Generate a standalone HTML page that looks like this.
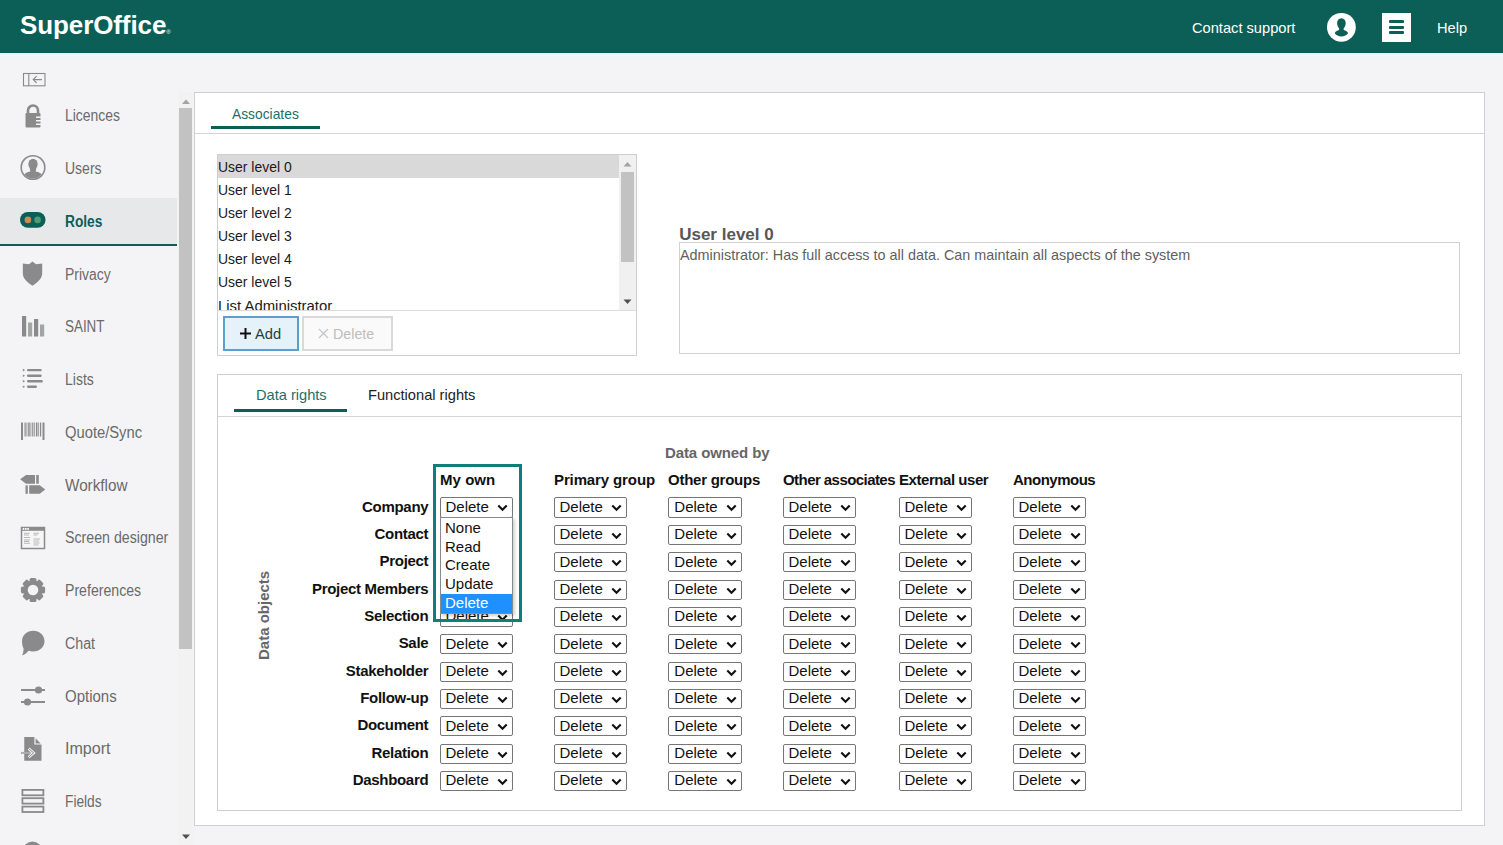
<!DOCTYPE html>
<html><head><meta charset="utf-8">
<style>
*{box-sizing:border-box;margin:0;padding:0}
html,body{width:1503px;height:845px;overflow:hidden;background:#f4f4f6;font-family:"Liberation Sans",sans-serif;}
.abs{position:absolute}
.t{position:absolute;white-space:nowrap;transform-origin:0 0}
svg{position:absolute}
.panel{position:absolute;background:#fff;border:1px solid #cfcfcf}
.ul{position:absolute;height:3px;background:#0b5f57}
.hl{position:absolute;height:1px;background:#d4d4d4}
.sel{position:absolute;width:73px;height:20px;border:1px solid #767676;border-radius:2px;background:#fff}
</style></head><body>
<div class="abs" style="left:0;top:0;width:1503px;height:53px;background:#0b5f57"></div>
<div class="t" style="left:20px;top:10px;color:#fff;font-weight:bold;font-size:26px;letter-spacing:-0.1px;line-height:30px">SuperOffice<span style="font-size:6px;font-weight:normal;letter-spacing:0">&reg;</span></div>
<div class="t" style="left:1192.00px;top:17.80px;font-size:15.00px;line-height:20px;color:#fff;font-weight:normal;transform:scaleX(0.976);">Contact support</div>

<svg style="left:1326px;top:12px" width="31" height="31" viewBox="0 0 31 31"><circle cx="15.4" cy="15.3" r="14.4" fill="#fff"/><path d="M15.4 6.3C12.5 6.3 11.1 8.5 11.1 11.1C11.1 13.3 11.9 15.2 13.1 16.2L13.1 18.1C11 18.8 9.3 19.7 8.7 21.3C10 23.3 12.5 24.5 15.4 24.5C18.3 24.5 20.8 23.3 22.1 21.3C21.5 19.7 19.8 18.8 17.7 18.1L17.7 16.2C18.9 15.2 19.7 13.3 19.7 11.1C19.7 8.5 18.3 6.3 15.4 6.3Z" fill="#0b5f57"/></svg>
<div class="abs" style="left:1382px;top:13px;width:29px;height:29px;background:#fff"></div>
<div class="abs" style="left:1389px;top:20px;width:15px;height:3px;border-radius:1px;background:#0b5f57"></div>
<div class="abs" style="left:1389px;top:26px;width:15px;height:3px;border-radius:1px;background:#0b5f57"></div>
<div class="abs" style="left:1389px;top:31px;width:15px;height:3px;border-radius:1px;background:#0b5f57"></div>
<div class="t" style="left:1437.00px;top:17.80px;font-size:15.00px;line-height:20px;color:#fff;font-weight:normal;transform:scaleX(0.976);">Help</div>

<div class="abs" style="left:0;top:198px;width:177px;height:46px;background:#e6e8ea"></div>
<div class="abs" style="left:0;top:244px;width:177px;height:2px;background:#0b5f57"></div>
<div class="t" style="left:65.30px;top:106.26px;font-size:16.00px;line-height:20px;color:#6a6a6a;font-weight:normal;transform:scaleX(0.869);">Licences</div>

<div class="t" style="left:65.30px;top:159.02px;font-size:16.00px;line-height:20px;color:#6a6a6a;font-weight:normal;transform:scaleX(0.875);">Users</div>

<div class="t" style="left:65.30px;top:211.78px;font-size:16.00px;line-height:20px;color:#0b5f57;font-weight:bold;transform:scaleX(0.857);">Roles</div>

<div class="t" style="left:65.30px;top:264.54px;font-size:16.00px;line-height:20px;color:#6a6a6a;font-weight:normal;transform:scaleX(0.871);">Privacy</div>

<div class="t" style="left:65.30px;top:317.30px;font-size:16.00px;line-height:20px;color:#6a6a6a;font-weight:normal;transform:scaleX(0.838);">SAINT</div>

<div class="t" style="left:65.30px;top:370.06px;font-size:16.00px;line-height:20px;color:#6a6a6a;font-weight:normal;transform:scaleX(0.874);">Lists</div>

<div class="t" style="left:65.30px;top:422.82px;font-size:16.00px;line-height:20px;color:#6a6a6a;font-weight:normal;transform:scaleX(0.922);">Quote/Sync</div>

<div class="t" style="left:65.30px;top:475.58px;font-size:16.00px;line-height:20px;color:#6a6a6a;font-weight:normal;transform:scaleX(0.954);">Workflow</div>

<div class="t" style="left:65.30px;top:528.34px;font-size:16.00px;line-height:20px;color:#6a6a6a;font-weight:normal;transform:scaleX(0.887);">Screen designer</div>

<div class="t" style="left:65.30px;top:581.10px;font-size:16.00px;line-height:20px;color:#6a6a6a;font-weight:normal;transform:scaleX(0.882);">Preferences</div>

<div class="t" style="left:65.30px;top:633.86px;font-size:16.00px;line-height:20px;color:#6a6a6a;font-weight:normal;transform:scaleX(0.888);">Chat</div>

<div class="t" style="left:65.30px;top:686.62px;font-size:16.00px;line-height:20px;color:#6a6a6a;font-weight:normal;transform:scaleX(0.937);">Options</div>

<div class="t" style="left:65.30px;top:739.38px;font-size:16.00px;line-height:20px;color:#6a6a6a;font-weight:normal;transform:scaleX(1.004);">Import</div>

<div class="t" style="left:65.30px;top:792.14px;font-size:16.00px;line-height:20px;color:#6a6a6a;font-weight:normal;transform:scaleX(0.858);">Fields</div>

<svg style="left:22px;top:72px" width="24" height="15" viewBox="0 0 24 15"><rect x="1.5" y="1.5" width="21.5" height="12.3" fill="none" stroke="#8a8a8a" stroke-width="1.1"/><line x1="6.8" y1="1.5" x2="6.8" y2="13.8" stroke="#8a8a8a" stroke-width="1.1"/><path d="M20 7.6H11.2M14.6 4.2L11.2 7.6L14.6 11" fill="none" stroke="#8a8a8a" stroke-width="1.1"/></svg>
<svg style="left:24px;top:103px" width="18" height="26" viewBox="0 0 18 26"><path d="M4 11V7.5a5 5 0 0 1 10 0V11" fill="none" stroke="#8a8a8a" stroke-width="2.6"/><rect x="1.5" y="10" width="15" height="14.5" rx="1" fill="#8a8a8a"/><rect x="12" y="13.5" width="5" height="1.5" fill="#f4f4f6"/><rect x="12" y="17" width="5" height="1.5" fill="#f4f4f6"/><rect x="12" y="20.5" width="5" height="1.5" fill="#f4f4f6"/></svg>
<svg style="left:20px;top:154px" width="27" height="27" viewBox="0 0 27 27"><defs><clipPath id="uc"><circle cx="13" cy="13.5" r="11"/></clipPath></defs><circle cx="13" cy="13.5" r="11.8" fill="none" stroke="#8a8a8a" stroke-width="1.6"/><g clip-path="url(#uc)" fill="#8a8a8a"><ellipse cx="13" cy="10.3" rx="4.6" ry="5.6"/><path d="M9.8 14.5L10.3 17.5C6 18.3 3.5 20 2.8 23.5L3 27H23L23.2 23.5C22.5 20 20 18.3 15.7 17.5L16.2 14.5Z"/></g></svg>
<svg style="left:20px;top:212px" width="26" height="16" viewBox="0 0 26 16"><rect x="0" y="0" width="25.5" height="15.8" rx="7.9" fill="#0c5f58"/><circle cx="7.9" cy="7.9" r="3.3" fill="#d08a55"/><circle cx="17.6" cy="7.9" r="3.3" fill="#4f9c70"/></svg>
<svg style="left:22px;top:261px" width="21" height="25" viewBox="0 0 21 25"><path d="M10.5 0.5L14 3.2L20.2 2.4V12.5C20.2 17.5 15.5 21.5 10.5 24.8C5.5 21.5 0.8 17.5 0.8 12.5V2.4L7 3.2Z" fill="#8a8a8a"/></svg>
<svg style="left:21px;top:316px" width="24" height="21" viewBox="0 0 24 21"><rect x="1" y="0" width="4.2" height="20.5" fill="#8a8a8a"/><rect x="7" y="6.5" width="4.2" height="14" fill="#a2a6a4"/><rect x="13" y="3" width="4.2" height="17.5" fill="#8a8a8a"/><rect x="19" y="8.5" width="4.2" height="12" fill="#a2a6a4"/></svg>
<svg style="left:21px;top:367px" width="24" height="23" viewBox="0 0 24 23"><g fill="#8a8a8a"><rect x="6" y="1.90" width="14.7" height="2.4" rx="1.1"/><path d="M1.8 1.80L4.2 3.10L1.8 4.40Z"/><rect x="6" y="7.50" width="14.7" height="2.4" rx="1.1"/><path d="M1.8 7.40L4.2 8.70L1.8 10.00Z"/><rect x="6" y="13.10" width="15.8" height="2.4" rx="1.1"/><path d="M1.8 13.00L4.2 14.30L1.8 15.60Z"/><rect x="6" y="18.50" width="10.0" height="2.4" rx="1.1"/><path d="M1.8 18.40L4.2 19.70L1.8 21.00Z"/></g></svg>
<svg style="left:20px;top:422px" width="26" height="19" viewBox="0 0 26 19"><g fill="#8a8a8a"><rect x="1" y="0.5" width="2" height="17.5"/><rect x="22.5" y="0.5" width="2" height="17.5"/><rect x="4.5" y="0.5" width="1.2" height="14"/><rect x="6.5" y="0.5" width="0.8" height="14"/><rect x="8.2" y="0.5" width="1.5" height="14"/><rect x="10.5" y="0.5" width="0.8" height="14"/><rect x="12.2" y="0.5" width="1.2" height="14"/><rect x="14.3" y="0.5" width="0.8" height="14"/><rect x="16.0" y="0.5" width="1.5" height="14"/><rect x="18.3" y="0.5" width="0.8" height="14"/><rect x="20.0" y="0.5" width="1.2" height="14"/></g></svg>
<svg style="left:19px;top:474px" width="28" height="21" viewBox="0 0 28 21"><g fill="#8a8a8a"><path d="M1.1 5.35L7 1H16V9.7H7Z"/><rect x="17.2" y="1" width="2.6" height="8.7"/><rect x="6.5" y="11.3" width="2.3" height="8.5"/><path d="M10.2 11.3H20.8L26.2 15.55L20.8 19.8H10.2Z"/></g></svg>
<svg style="left:20px;top:526px" width="26" height="24" viewBox="0 0 26 24"><rect x="1.5" y="1.5" width="23" height="21" fill="#f6f6f6" stroke="#8a8a8a" stroke-width="1.5"/><rect x="1" y="1" width="24" height="3.8" fill="#8a8a8a"/><g fill="#fff"><rect x="2.7" y="2" width="1.6" height="1.8"/><rect x="5" y="2" width="1.6" height="1.8"/><rect x="7.3" y="2" width="1.6" height="1.8"/></g><g fill="#b8b8b8"><rect x="4" y="6.8" width="5.5" height="1"/><rect x="4" y="8.5" width="5" height="1"/><rect x="4" y="11" width="6" height="1"/><rect x="4" y="13.5" width="6" height="1"/><rect x="4" y="15" width="5" height="1"/><rect x="4" y="16.8" width="6" height="1"/><rect x="13.5" y="6.8" width="5.5" height="1"/><rect x="13.5" y="8.5" width="4" height="1"/><rect x="13.5" y="12.5" width="6.5" height="1"/><rect x="13.5" y="14.5" width="5.5" height="1"/><rect x="13.5" y="16.5" width="6" height="1"/><rect x="13.5" y="18.5" width="5" height="1"/></g></svg>
<svg style="left:20px;top:577px" width="26" height="26" viewBox="-13 -13 26 26"><g fill="#8a8a8a"><circle r="9.6"/><g id="t"><rect x="-3.4" y="-12.1" width="6.8" height="5" rx="1.6"/></g><use href="#t" transform="rotate(45)"/><use href="#t" transform="rotate(90)"/><use href="#t" transform="rotate(135)"/><use href="#t" transform="rotate(180)"/><use href="#t" transform="rotate(225)"/><use href="#t" transform="rotate(270)"/><use href="#t" transform="rotate(315)"/></g><circle r="5.3" fill="#f4f4f6"/></svg>
<svg style="left:20px;top:630px" width="26" height="27" viewBox="0 0 26 27"><path d="M13.3 0.8C19.5 0.8 24.5 5.4 24.5 11.2C24.5 17 19.5 21.5 13.3 21.5C11.5 21.5 10 21.2 8.7 20.7C6.8 23 4.5 24.6 2 25.5C3 23.5 3.5 21.5 3.6 18.5C2.5 16.5 2 14 2 11.2C2 5.4 7 0.8 13.3 0.8Z" fill="#8a8a8a"/></svg>
<svg style="left:20px;top:684px" width="26" height="22" viewBox="0 0 26 22"><g fill="#8a8a8a"><rect x="1" y="5" width="24" height="2"/><circle cx="18.5" cy="6" r="3.6"/><rect x="1" y="17" width="24" height="2"/><circle cx="7.5" cy="18" r="3.6"/></g></svg>
<svg style="left:20px;top:736px" width="24" height="26" viewBox="0 0 24 26"><path d="M4.25 1H14.4V8.6H21.5V24.8H4.25Z" fill="#8a8a8a"/><path d="M15.6 2.2L20.6 7.4H15.6Z" fill="#8a8a8a"/><path d="M1 16.9H11" stroke="#a9adab" stroke-width="2"/><path d="M8.6 12.6L13.6 16.9L8.6 21.2" fill="none" stroke="#f4f4f6" stroke-width="2.8" stroke-linejoin="miter"/><path d="M8.6 12.6L13.6 16.9L8.6 21.2" fill="none" stroke="#8a8a8a" stroke-width="1"/></svg>
<svg style="left:20px;top:788px" width="25" height="26" viewBox="0 0 25 26"><g fill="none" stroke="#8a8a8a" stroke-width="1.8"><rect x="2.4" y="1.9" width="21" height="5.4"/><rect x="2.4" y="10.2" width="21" height="5.4"/><rect x="2.4" y="18.6" width="21" height="5.4"/></g></svg>
<svg style="left:22px;top:841px" width="21" height="5" viewBox="0 0 21 5"><circle cx="10.5" cy="10" r="9.6" fill="#8a8a8a"/></svg>

<div class="abs" style="left:178px;top:92px;width:15px;height:753px;background:#f2f2f3"></div>
<div class="abs" style="left:179px;top:108px;width:13px;height:541px;background:#c2c2c2"></div>
<svg style="left:180px;top:97px" width="12" height="8"><path d="M2 7L6 2.5L10 7Z" fill="#a3a3a3"/></svg>
<svg style="left:180px;top:833px" width="12" height="8"><path d="M2 1.5L6 6L10 1.5Z" fill="#505050"/></svg>
<div class="panel" style="left:194px;top:92px;width:1291px;height:734px"></div>
<div class="t" style="left:232.30px;top:103.50px;font-size:15.00px;line-height:20px;color:#1d6f69;font-weight:normal;transform:scaleX(0.921);">Associates</div>

<div class="ul" style="left:211px;top:126px;width:109px"></div>
<div class="hl" style="left:195px;top:133px;width:1289px"></div>
<div class="panel" style="left:217px;top:154px;width:420px;height:202px;border-color:#cfcfcf"></div>
<div class="abs" style="left:218px;top:155px;width:401px;height:23px;background:#d9d9d9"></div>
<div class="abs" style="left:218px;top:310px;width:418px;height:1px;background:#dcdcdc"></div>
<div class="abs" style="left:619px;top:155px;width:17px;height:155px;background:#f0f0f0"></div>
<div class="abs" style="left:621px;top:172px;width:13px;height:90px;background:#c2c2c2"></div>
<svg style="left:621px;top:160px" width="13" height="8"><path d="M2.5 6.5L6.5 2L10.5 6.5Z" fill="#a3a3a3"/></svg>
<svg style="left:621px;top:298px" width="13" height="8"><path d="M2.5 1.5L6.5 6L10.5 1.5Z" fill="#505050"/></svg>
<div style="position:absolute;left:218px;top:155px;width:401px;height:155px;overflow:hidden">
<div class="t" style="left:0.00px;top:1.70px;font-size:15.00px;line-height:20px;color:#1a1a1a;font-weight:normal;transform:scaleX(0.930);">User level 0</div>

<div class="t" style="left:0.00px;top:24.70px;font-size:15.00px;line-height:20px;color:#1a1a1a;font-weight:normal;transform:scaleX(0.930);">User level 1</div>

<div class="t" style="left:0.00px;top:47.70px;font-size:15.00px;line-height:20px;color:#1a1a1a;font-weight:normal;transform:scaleX(0.930);">User level 2</div>

<div class="t" style="left:0.00px;top:70.70px;font-size:15.00px;line-height:20px;color:#1a1a1a;font-weight:normal;transform:scaleX(0.930);">User level 3</div>

<div class="t" style="left:0.00px;top:93.70px;font-size:15.00px;line-height:20px;color:#1a1a1a;font-weight:normal;transform:scaleX(0.930);">User level 4</div>

<div class="t" style="left:0.00px;top:116.70px;font-size:15.00px;line-height:20px;color:#1a1a1a;font-weight:normal;transform:scaleX(0.930);">User level 5</div>

<div class="t" style="left:0.00px;top:140.90px;font-size:15.00px;line-height:20px;color:#1a1a1a;font-weight:normal;transform:scaleX(0.993);">List Administrator</div>

</div>
<div class="abs" style="left:223px;top:316px;width:76px;height:35px;border:2px solid #5a9fd2;background:#e6f2f9"></div>
<svg style="left:239px;top:327px" width="13" height="13"><path d="M6.5 1V12M1 6.5H12" stroke="#111" stroke-width="2"/></svg>
<div class="t" style="left:254.50px;top:323.80px;font-size:15.00px;line-height:20px;color:#1f3f3c;font-weight:normal;transform:scaleX(0.977);">Add</div>

<div class="abs" style="left:302px;top:316px;width:91px;height:35px;border:2px solid #d9d9d9;background:#fafafa"></div>
<svg style="left:318px;top:328px" width="11" height="11"><path d="M1 1L10 10M10 1L1 10" stroke="#c4c4c4" stroke-width="1.2"/></svg>
<div class="t" style="left:333.00px;top:323.80px;font-size:15.00px;line-height:20px;color:#bdbdbd;font-weight:normal;transform:scaleX(0.950);">Delete</div>

<div class="t" style="left:679.20px;top:224.81px;font-size:17.00px;line-height:20px;color:#575757;font-weight:bold;transform:scaleX(1.000);">User level 0</div>

<div class="panel" style="left:679px;top:242px;width:781px;height:112px;border-color:#d2d2d2"></div>
<div class="t" style="left:680.00px;top:245.01px;font-size:14.40px;line-height:20px;color:#5f5f5f;font-weight:normal;transform:scaleX(1.000);">Administrator: Has full access to all data. Can maintain all aspects of the system</div>

<div class="panel" style="left:217px;top:374px;width:1245px;height:437px;border-color:#cfcfcf"></div>
<div class="t" style="left:256.00px;top:385.30px;font-size:15.00px;line-height:20px;color:#1d6f69;font-weight:normal;transform:scaleX(0.974);">Data rights</div>

<div class="t" style="left:368.00px;top:385.30px;font-size:15.00px;line-height:20px;color:#222;font-weight:normal;transform:scaleX(0.976);">Functional rights</div>

<div class="ul" style="left:234px;top:409px;width:113px"></div>
<div class="hl" style="left:218px;top:416px;width:1243px"></div>
<div class="t" style="left:665.00px;top:443.80px;font-size:15px;line-height:18px;color:#666;font-weight:bold;letter-spacing:-0.1px;">Data owned by</div>

<div class="t" style="left:255px;top:660px;transform:rotate(-90deg);font-size:15px;font-weight:bold;color:#666;line-height:18px">Data objects</div>
<div class="t" style="left:440.00px;top:470.80px;font-size:15px;line-height:18px;color:#111;font-weight:bold;letter-spacing:0.05px;">My own</div>

<div class="t" style="left:554.00px;top:470.80px;font-size:15px;line-height:18px;color:#111;font-weight:bold;letter-spacing:-0.12px;">Primary group</div>

<div class="t" style="left:668.00px;top:470.80px;font-size:15px;line-height:18px;color:#111;font-weight:bold;letter-spacing:-0.25px;">Other groups</div>

<div class="t" style="left:783.00px;top:470.80px;font-size:15px;line-height:18px;color:#111;font-weight:bold;letter-spacing:-0.56px;">Other associates</div>

<div class="t" style="left:899.00px;top:470.80px;font-size:15px;line-height:18px;color:#111;font-weight:bold;letter-spacing:-0.45px;">External user</div>

<div class="t" style="left:1013.00px;top:470.80px;font-size:15px;line-height:18px;color:#111;font-weight:bold;letter-spacing:-0.5px;">Anonymous</div>

<div class="t" style="right:1074.70px;top:497.65px;font-size:15px;line-height:18px;color:#111;font-weight:bold;letter-spacing:-0.3px;text-align:right;">Company</div>

<div class="sel" style="left:440px;top:497px;height:21px;"><svg style="left:56px;top:6px" width="11" height="8" viewBox="0 0 11 8"><path d="M1.3 1.5L5.5 5.8L9.7 1.5" fill="none" stroke="#111" stroke-width="2.1"/></svg></div>
<div class="t" style="left:445.50px;top:497.85px;font-size:15px;line-height:18px;color:#111;font-weight:normal;letter-spacing:0px;">Delete</div>

<div class="sel" style="left:554px;top:497px;height:21px;"><svg style="left:56px;top:6px" width="11" height="8" viewBox="0 0 11 8"><path d="M1.3 1.5L5.5 5.8L9.7 1.5" fill="none" stroke="#111" stroke-width="2.1"/></svg></div>
<div class="t" style="left:559.50px;top:497.85px;font-size:15px;line-height:18px;color:#111;font-weight:normal;letter-spacing:0px;">Delete</div>

<div class="sel" style="left:668px;top:497px;height:21px;width:74px;"><svg style="left:57px;top:6px" width="11" height="8" viewBox="0 0 11 8"><path d="M1.3 1.5L5.5 5.8L9.7 1.5" fill="none" stroke="#111" stroke-width="2.1"/></svg></div>
<div class="t" style="left:674.30px;top:497.85px;font-size:15px;line-height:18px;color:#111;font-weight:normal;letter-spacing:0px;">Delete</div>

<div class="sel" style="left:783px;top:497px;height:21px;"><svg style="left:56px;top:6px" width="11" height="8" viewBox="0 0 11 8"><path d="M1.3 1.5L5.5 5.8L9.7 1.5" fill="none" stroke="#111" stroke-width="2.1"/></svg></div>
<div class="t" style="left:788.50px;top:497.85px;font-size:15px;line-height:18px;color:#111;font-weight:normal;letter-spacing:0px;">Delete</div>

<div class="sel" style="left:899px;top:497px;height:21px;"><svg style="left:56px;top:6px" width="11" height="8" viewBox="0 0 11 8"><path d="M1.3 1.5L5.5 5.8L9.7 1.5" fill="none" stroke="#111" stroke-width="2.1"/></svg></div>
<div class="t" style="left:904.50px;top:497.85px;font-size:15px;line-height:18px;color:#111;font-weight:normal;letter-spacing:0px;">Delete</div>

<div class="sel" style="left:1013px;top:497px;height:21px;"><svg style="left:56px;top:6px" width="11" height="8" viewBox="0 0 11 8"><path d="M1.3 1.5L5.5 5.8L9.7 1.5" fill="none" stroke="#111" stroke-width="2.1"/></svg></div>
<div class="t" style="left:1018.50px;top:497.85px;font-size:15px;line-height:18px;color:#111;font-weight:normal;letter-spacing:0px;">Delete</div>

<div class="t" style="right:1074.70px;top:524.99px;font-size:15px;line-height:18px;color:#111;font-weight:bold;letter-spacing:-0.3px;text-align:right;">Contact</div>

<div class="sel" style="left:440px;top:525px;"><svg style="left:56px;top:6px" width="11" height="8" viewBox="0 0 11 8"><path d="M1.3 1.5L5.5 5.8L9.7 1.5" fill="none" stroke="#111" stroke-width="2.1"/></svg></div>
<div class="t" style="left:445.50px;top:525.19px;font-size:15px;line-height:18px;color:#111;font-weight:normal;letter-spacing:0px;">Delete</div>

<div class="sel" style="left:554px;top:525px;"><svg style="left:56px;top:6px" width="11" height="8" viewBox="0 0 11 8"><path d="M1.3 1.5L5.5 5.8L9.7 1.5" fill="none" stroke="#111" stroke-width="2.1"/></svg></div>
<div class="t" style="left:559.50px;top:525.19px;font-size:15px;line-height:18px;color:#111;font-weight:normal;letter-spacing:0px;">Delete</div>

<div class="sel" style="left:668px;top:525px;width:74px;"><svg style="left:57px;top:6px" width="11" height="8" viewBox="0 0 11 8"><path d="M1.3 1.5L5.5 5.8L9.7 1.5" fill="none" stroke="#111" stroke-width="2.1"/></svg></div>
<div class="t" style="left:674.30px;top:525.19px;font-size:15px;line-height:18px;color:#111;font-weight:normal;letter-spacing:0px;">Delete</div>

<div class="sel" style="left:783px;top:525px;"><svg style="left:56px;top:6px" width="11" height="8" viewBox="0 0 11 8"><path d="M1.3 1.5L5.5 5.8L9.7 1.5" fill="none" stroke="#111" stroke-width="2.1"/></svg></div>
<div class="t" style="left:788.50px;top:525.19px;font-size:15px;line-height:18px;color:#111;font-weight:normal;letter-spacing:0px;">Delete</div>

<div class="sel" style="left:899px;top:525px;"><svg style="left:56px;top:6px" width="11" height="8" viewBox="0 0 11 8"><path d="M1.3 1.5L5.5 5.8L9.7 1.5" fill="none" stroke="#111" stroke-width="2.1"/></svg></div>
<div class="t" style="left:904.50px;top:525.19px;font-size:15px;line-height:18px;color:#111;font-weight:normal;letter-spacing:0px;">Delete</div>

<div class="sel" style="left:1013px;top:525px;"><svg style="left:56px;top:6px" width="11" height="8" viewBox="0 0 11 8"><path d="M1.3 1.5L5.5 5.8L9.7 1.5" fill="none" stroke="#111" stroke-width="2.1"/></svg></div>
<div class="t" style="left:1018.50px;top:525.19px;font-size:15px;line-height:18px;color:#111;font-weight:normal;letter-spacing:0px;">Delete</div>

<div class="t" style="right:1074.70px;top:552.33px;font-size:15px;line-height:18px;color:#111;font-weight:bold;letter-spacing:-0.3px;text-align:right;">Project</div>

<div class="sel" style="left:440px;top:552px;"><svg style="left:56px;top:6px" width="11" height="8" viewBox="0 0 11 8"><path d="M1.3 1.5L5.5 5.8L9.7 1.5" fill="none" stroke="#111" stroke-width="2.1"/></svg></div>
<div class="t" style="left:445.50px;top:552.53px;font-size:15px;line-height:18px;color:#111;font-weight:normal;letter-spacing:0px;">Delete</div>

<div class="sel" style="left:554px;top:552px;"><svg style="left:56px;top:6px" width="11" height="8" viewBox="0 0 11 8"><path d="M1.3 1.5L5.5 5.8L9.7 1.5" fill="none" stroke="#111" stroke-width="2.1"/></svg></div>
<div class="t" style="left:559.50px;top:552.53px;font-size:15px;line-height:18px;color:#111;font-weight:normal;letter-spacing:0px;">Delete</div>

<div class="sel" style="left:668px;top:552px;width:74px;"><svg style="left:57px;top:6px" width="11" height="8" viewBox="0 0 11 8"><path d="M1.3 1.5L5.5 5.8L9.7 1.5" fill="none" stroke="#111" stroke-width="2.1"/></svg></div>
<div class="t" style="left:674.30px;top:552.53px;font-size:15px;line-height:18px;color:#111;font-weight:normal;letter-spacing:0px;">Delete</div>

<div class="sel" style="left:783px;top:552px;"><svg style="left:56px;top:6px" width="11" height="8" viewBox="0 0 11 8"><path d="M1.3 1.5L5.5 5.8L9.7 1.5" fill="none" stroke="#111" stroke-width="2.1"/></svg></div>
<div class="t" style="left:788.50px;top:552.53px;font-size:15px;line-height:18px;color:#111;font-weight:normal;letter-spacing:0px;">Delete</div>

<div class="sel" style="left:899px;top:552px;"><svg style="left:56px;top:6px" width="11" height="8" viewBox="0 0 11 8"><path d="M1.3 1.5L5.5 5.8L9.7 1.5" fill="none" stroke="#111" stroke-width="2.1"/></svg></div>
<div class="t" style="left:904.50px;top:552.53px;font-size:15px;line-height:18px;color:#111;font-weight:normal;letter-spacing:0px;">Delete</div>

<div class="sel" style="left:1013px;top:552px;"><svg style="left:56px;top:6px" width="11" height="8" viewBox="0 0 11 8"><path d="M1.3 1.5L5.5 5.8L9.7 1.5" fill="none" stroke="#111" stroke-width="2.1"/></svg></div>
<div class="t" style="left:1018.50px;top:552.53px;font-size:15px;line-height:18px;color:#111;font-weight:normal;letter-spacing:0px;">Delete</div>

<div class="t" style="right:1074.70px;top:579.67px;font-size:15px;line-height:18px;color:#111;font-weight:bold;letter-spacing:-0.3px;text-align:right;">Project Members</div>

<div class="sel" style="left:440px;top:580px;"><svg style="left:56px;top:6px" width="11" height="8" viewBox="0 0 11 8"><path d="M1.3 1.5L5.5 5.8L9.7 1.5" fill="none" stroke="#111" stroke-width="2.1"/></svg></div>
<div class="t" style="left:445.50px;top:579.87px;font-size:15px;line-height:18px;color:#111;font-weight:normal;letter-spacing:0px;">Delete</div>

<div class="sel" style="left:554px;top:580px;"><svg style="left:56px;top:6px" width="11" height="8" viewBox="0 0 11 8"><path d="M1.3 1.5L5.5 5.8L9.7 1.5" fill="none" stroke="#111" stroke-width="2.1"/></svg></div>
<div class="t" style="left:559.50px;top:579.87px;font-size:15px;line-height:18px;color:#111;font-weight:normal;letter-spacing:0px;">Delete</div>

<div class="sel" style="left:668px;top:580px;width:74px;"><svg style="left:57px;top:6px" width="11" height="8" viewBox="0 0 11 8"><path d="M1.3 1.5L5.5 5.8L9.7 1.5" fill="none" stroke="#111" stroke-width="2.1"/></svg></div>
<div class="t" style="left:674.30px;top:579.87px;font-size:15px;line-height:18px;color:#111;font-weight:normal;letter-spacing:0px;">Delete</div>

<div class="sel" style="left:783px;top:580px;"><svg style="left:56px;top:6px" width="11" height="8" viewBox="0 0 11 8"><path d="M1.3 1.5L5.5 5.8L9.7 1.5" fill="none" stroke="#111" stroke-width="2.1"/></svg></div>
<div class="t" style="left:788.50px;top:579.87px;font-size:15px;line-height:18px;color:#111;font-weight:normal;letter-spacing:0px;">Delete</div>

<div class="sel" style="left:899px;top:580px;"><svg style="left:56px;top:6px" width="11" height="8" viewBox="0 0 11 8"><path d="M1.3 1.5L5.5 5.8L9.7 1.5" fill="none" stroke="#111" stroke-width="2.1"/></svg></div>
<div class="t" style="left:904.50px;top:579.87px;font-size:15px;line-height:18px;color:#111;font-weight:normal;letter-spacing:0px;">Delete</div>

<div class="sel" style="left:1013px;top:580px;"><svg style="left:56px;top:6px" width="11" height="8" viewBox="0 0 11 8"><path d="M1.3 1.5L5.5 5.8L9.7 1.5" fill="none" stroke="#111" stroke-width="2.1"/></svg></div>
<div class="t" style="left:1018.50px;top:579.87px;font-size:15px;line-height:18px;color:#111;font-weight:normal;letter-spacing:0px;">Delete</div>

<div class="t" style="right:1074.70px;top:607.01px;font-size:15px;line-height:18px;color:#111;font-weight:bold;letter-spacing:-0.3px;text-align:right;">Selection</div>

<div class="sel" style="left:440px;top:607px;"><svg style="left:56px;top:6px" width="11" height="8" viewBox="0 0 11 8"><path d="M1.3 1.5L5.5 5.8L9.7 1.5" fill="none" stroke="#111" stroke-width="2.1"/></svg></div>
<div class="t" style="left:445.50px;top:607.21px;font-size:15px;line-height:18px;color:#111;font-weight:normal;letter-spacing:0px;">Delete</div>

<div class="sel" style="left:554px;top:607px;"><svg style="left:56px;top:6px" width="11" height="8" viewBox="0 0 11 8"><path d="M1.3 1.5L5.5 5.8L9.7 1.5" fill="none" stroke="#111" stroke-width="2.1"/></svg></div>
<div class="t" style="left:559.50px;top:607.21px;font-size:15px;line-height:18px;color:#111;font-weight:normal;letter-spacing:0px;">Delete</div>

<div class="sel" style="left:668px;top:607px;width:74px;"><svg style="left:57px;top:6px" width="11" height="8" viewBox="0 0 11 8"><path d="M1.3 1.5L5.5 5.8L9.7 1.5" fill="none" stroke="#111" stroke-width="2.1"/></svg></div>
<div class="t" style="left:674.30px;top:607.21px;font-size:15px;line-height:18px;color:#111;font-weight:normal;letter-spacing:0px;">Delete</div>

<div class="sel" style="left:783px;top:607px;"><svg style="left:56px;top:6px" width="11" height="8" viewBox="0 0 11 8"><path d="M1.3 1.5L5.5 5.8L9.7 1.5" fill="none" stroke="#111" stroke-width="2.1"/></svg></div>
<div class="t" style="left:788.50px;top:607.21px;font-size:15px;line-height:18px;color:#111;font-weight:normal;letter-spacing:0px;">Delete</div>

<div class="sel" style="left:899px;top:607px;"><svg style="left:56px;top:6px" width="11" height="8" viewBox="0 0 11 8"><path d="M1.3 1.5L5.5 5.8L9.7 1.5" fill="none" stroke="#111" stroke-width="2.1"/></svg></div>
<div class="t" style="left:904.50px;top:607.21px;font-size:15px;line-height:18px;color:#111;font-weight:normal;letter-spacing:0px;">Delete</div>

<div class="sel" style="left:1013px;top:607px;"><svg style="left:56px;top:6px" width="11" height="8" viewBox="0 0 11 8"><path d="M1.3 1.5L5.5 5.8L9.7 1.5" fill="none" stroke="#111" stroke-width="2.1"/></svg></div>
<div class="t" style="left:1018.50px;top:607.21px;font-size:15px;line-height:18px;color:#111;font-weight:normal;letter-spacing:0px;">Delete</div>

<div class="t" style="right:1074.70px;top:634.35px;font-size:15px;line-height:18px;color:#111;font-weight:bold;letter-spacing:-0.3px;text-align:right;">Sale</div>

<div class="sel" style="left:440px;top:634px;"><svg style="left:56px;top:6px" width="11" height="8" viewBox="0 0 11 8"><path d="M1.3 1.5L5.5 5.8L9.7 1.5" fill="none" stroke="#111" stroke-width="2.1"/></svg></div>
<div class="t" style="left:445.50px;top:634.55px;font-size:15px;line-height:18px;color:#111;font-weight:normal;letter-spacing:0px;">Delete</div>

<div class="sel" style="left:554px;top:634px;"><svg style="left:56px;top:6px" width="11" height="8" viewBox="0 0 11 8"><path d="M1.3 1.5L5.5 5.8L9.7 1.5" fill="none" stroke="#111" stroke-width="2.1"/></svg></div>
<div class="t" style="left:559.50px;top:634.55px;font-size:15px;line-height:18px;color:#111;font-weight:normal;letter-spacing:0px;">Delete</div>

<div class="sel" style="left:668px;top:634px;width:74px;"><svg style="left:57px;top:6px" width="11" height="8" viewBox="0 0 11 8"><path d="M1.3 1.5L5.5 5.8L9.7 1.5" fill="none" stroke="#111" stroke-width="2.1"/></svg></div>
<div class="t" style="left:674.30px;top:634.55px;font-size:15px;line-height:18px;color:#111;font-weight:normal;letter-spacing:0px;">Delete</div>

<div class="sel" style="left:783px;top:634px;"><svg style="left:56px;top:6px" width="11" height="8" viewBox="0 0 11 8"><path d="M1.3 1.5L5.5 5.8L9.7 1.5" fill="none" stroke="#111" stroke-width="2.1"/></svg></div>
<div class="t" style="left:788.50px;top:634.55px;font-size:15px;line-height:18px;color:#111;font-weight:normal;letter-spacing:0px;">Delete</div>

<div class="sel" style="left:899px;top:634px;"><svg style="left:56px;top:6px" width="11" height="8" viewBox="0 0 11 8"><path d="M1.3 1.5L5.5 5.8L9.7 1.5" fill="none" stroke="#111" stroke-width="2.1"/></svg></div>
<div class="t" style="left:904.50px;top:634.55px;font-size:15px;line-height:18px;color:#111;font-weight:normal;letter-spacing:0px;">Delete</div>

<div class="sel" style="left:1013px;top:634px;"><svg style="left:56px;top:6px" width="11" height="8" viewBox="0 0 11 8"><path d="M1.3 1.5L5.5 5.8L9.7 1.5" fill="none" stroke="#111" stroke-width="2.1"/></svg></div>
<div class="t" style="left:1018.50px;top:634.55px;font-size:15px;line-height:18px;color:#111;font-weight:normal;letter-spacing:0px;">Delete</div>

<div class="t" style="right:1074.70px;top:661.69px;font-size:15px;line-height:18px;color:#111;font-weight:bold;letter-spacing:-0.3px;text-align:right;">Stakeholder</div>

<div class="sel" style="left:440px;top:662px;"><svg style="left:56px;top:6px" width="11" height="8" viewBox="0 0 11 8"><path d="M1.3 1.5L5.5 5.8L9.7 1.5" fill="none" stroke="#111" stroke-width="2.1"/></svg></div>
<div class="t" style="left:445.50px;top:661.89px;font-size:15px;line-height:18px;color:#111;font-weight:normal;letter-spacing:0px;">Delete</div>

<div class="sel" style="left:554px;top:662px;"><svg style="left:56px;top:6px" width="11" height="8" viewBox="0 0 11 8"><path d="M1.3 1.5L5.5 5.8L9.7 1.5" fill="none" stroke="#111" stroke-width="2.1"/></svg></div>
<div class="t" style="left:559.50px;top:661.89px;font-size:15px;line-height:18px;color:#111;font-weight:normal;letter-spacing:0px;">Delete</div>

<div class="sel" style="left:668px;top:662px;width:74px;"><svg style="left:57px;top:6px" width="11" height="8" viewBox="0 0 11 8"><path d="M1.3 1.5L5.5 5.8L9.7 1.5" fill="none" stroke="#111" stroke-width="2.1"/></svg></div>
<div class="t" style="left:674.30px;top:661.89px;font-size:15px;line-height:18px;color:#111;font-weight:normal;letter-spacing:0px;">Delete</div>

<div class="sel" style="left:783px;top:662px;"><svg style="left:56px;top:6px" width="11" height="8" viewBox="0 0 11 8"><path d="M1.3 1.5L5.5 5.8L9.7 1.5" fill="none" stroke="#111" stroke-width="2.1"/></svg></div>
<div class="t" style="left:788.50px;top:661.89px;font-size:15px;line-height:18px;color:#111;font-weight:normal;letter-spacing:0px;">Delete</div>

<div class="sel" style="left:899px;top:662px;"><svg style="left:56px;top:6px" width="11" height="8" viewBox="0 0 11 8"><path d="M1.3 1.5L5.5 5.8L9.7 1.5" fill="none" stroke="#111" stroke-width="2.1"/></svg></div>
<div class="t" style="left:904.50px;top:661.89px;font-size:15px;line-height:18px;color:#111;font-weight:normal;letter-spacing:0px;">Delete</div>

<div class="sel" style="left:1013px;top:662px;"><svg style="left:56px;top:6px" width="11" height="8" viewBox="0 0 11 8"><path d="M1.3 1.5L5.5 5.8L9.7 1.5" fill="none" stroke="#111" stroke-width="2.1"/></svg></div>
<div class="t" style="left:1018.50px;top:661.89px;font-size:15px;line-height:18px;color:#111;font-weight:normal;letter-spacing:0px;">Delete</div>

<div class="t" style="right:1074.70px;top:689.03px;font-size:15px;line-height:18px;color:#111;font-weight:bold;letter-spacing:-0.3px;text-align:right;">Follow-up</div>

<div class="sel" style="left:440px;top:689px;"><svg style="left:56px;top:6px" width="11" height="8" viewBox="0 0 11 8"><path d="M1.3 1.5L5.5 5.8L9.7 1.5" fill="none" stroke="#111" stroke-width="2.1"/></svg></div>
<div class="t" style="left:445.50px;top:689.23px;font-size:15px;line-height:18px;color:#111;font-weight:normal;letter-spacing:0px;">Delete</div>

<div class="sel" style="left:554px;top:689px;"><svg style="left:56px;top:6px" width="11" height="8" viewBox="0 0 11 8"><path d="M1.3 1.5L5.5 5.8L9.7 1.5" fill="none" stroke="#111" stroke-width="2.1"/></svg></div>
<div class="t" style="left:559.50px;top:689.23px;font-size:15px;line-height:18px;color:#111;font-weight:normal;letter-spacing:0px;">Delete</div>

<div class="sel" style="left:668px;top:689px;width:74px;"><svg style="left:57px;top:6px" width="11" height="8" viewBox="0 0 11 8"><path d="M1.3 1.5L5.5 5.8L9.7 1.5" fill="none" stroke="#111" stroke-width="2.1"/></svg></div>
<div class="t" style="left:674.30px;top:689.23px;font-size:15px;line-height:18px;color:#111;font-weight:normal;letter-spacing:0px;">Delete</div>

<div class="sel" style="left:783px;top:689px;"><svg style="left:56px;top:6px" width="11" height="8" viewBox="0 0 11 8"><path d="M1.3 1.5L5.5 5.8L9.7 1.5" fill="none" stroke="#111" stroke-width="2.1"/></svg></div>
<div class="t" style="left:788.50px;top:689.23px;font-size:15px;line-height:18px;color:#111;font-weight:normal;letter-spacing:0px;">Delete</div>

<div class="sel" style="left:899px;top:689px;"><svg style="left:56px;top:6px" width="11" height="8" viewBox="0 0 11 8"><path d="M1.3 1.5L5.5 5.8L9.7 1.5" fill="none" stroke="#111" stroke-width="2.1"/></svg></div>
<div class="t" style="left:904.50px;top:689.23px;font-size:15px;line-height:18px;color:#111;font-weight:normal;letter-spacing:0px;">Delete</div>

<div class="sel" style="left:1013px;top:689px;"><svg style="left:56px;top:6px" width="11" height="8" viewBox="0 0 11 8"><path d="M1.3 1.5L5.5 5.8L9.7 1.5" fill="none" stroke="#111" stroke-width="2.1"/></svg></div>
<div class="t" style="left:1018.50px;top:689.23px;font-size:15px;line-height:18px;color:#111;font-weight:normal;letter-spacing:0px;">Delete</div>

<div class="t" style="right:1074.70px;top:716.37px;font-size:15px;line-height:18px;color:#111;font-weight:bold;letter-spacing:-0.3px;text-align:right;">Document</div>

<div class="sel" style="left:440px;top:716px;"><svg style="left:56px;top:6px" width="11" height="8" viewBox="0 0 11 8"><path d="M1.3 1.5L5.5 5.8L9.7 1.5" fill="none" stroke="#111" stroke-width="2.1"/></svg></div>
<div class="t" style="left:445.50px;top:716.57px;font-size:15px;line-height:18px;color:#111;font-weight:normal;letter-spacing:0px;">Delete</div>

<div class="sel" style="left:554px;top:716px;"><svg style="left:56px;top:6px" width="11" height="8" viewBox="0 0 11 8"><path d="M1.3 1.5L5.5 5.8L9.7 1.5" fill="none" stroke="#111" stroke-width="2.1"/></svg></div>
<div class="t" style="left:559.50px;top:716.57px;font-size:15px;line-height:18px;color:#111;font-weight:normal;letter-spacing:0px;">Delete</div>

<div class="sel" style="left:668px;top:716px;width:74px;"><svg style="left:57px;top:6px" width="11" height="8" viewBox="0 0 11 8"><path d="M1.3 1.5L5.5 5.8L9.7 1.5" fill="none" stroke="#111" stroke-width="2.1"/></svg></div>
<div class="t" style="left:674.30px;top:716.57px;font-size:15px;line-height:18px;color:#111;font-weight:normal;letter-spacing:0px;">Delete</div>

<div class="sel" style="left:783px;top:716px;"><svg style="left:56px;top:6px" width="11" height="8" viewBox="0 0 11 8"><path d="M1.3 1.5L5.5 5.8L9.7 1.5" fill="none" stroke="#111" stroke-width="2.1"/></svg></div>
<div class="t" style="left:788.50px;top:716.57px;font-size:15px;line-height:18px;color:#111;font-weight:normal;letter-spacing:0px;">Delete</div>

<div class="sel" style="left:899px;top:716px;"><svg style="left:56px;top:6px" width="11" height="8" viewBox="0 0 11 8"><path d="M1.3 1.5L5.5 5.8L9.7 1.5" fill="none" stroke="#111" stroke-width="2.1"/></svg></div>
<div class="t" style="left:904.50px;top:716.57px;font-size:15px;line-height:18px;color:#111;font-weight:normal;letter-spacing:0px;">Delete</div>

<div class="sel" style="left:1013px;top:716px;"><svg style="left:56px;top:6px" width="11" height="8" viewBox="0 0 11 8"><path d="M1.3 1.5L5.5 5.8L9.7 1.5" fill="none" stroke="#111" stroke-width="2.1"/></svg></div>
<div class="t" style="left:1018.50px;top:716.57px;font-size:15px;line-height:18px;color:#111;font-weight:normal;letter-spacing:0px;">Delete</div>

<div class="t" style="right:1074.70px;top:743.71px;font-size:15px;line-height:18px;color:#111;font-weight:bold;letter-spacing:-0.3px;text-align:right;">Relation</div>

<div class="sel" style="left:440px;top:744px;"><svg style="left:56px;top:6px" width="11" height="8" viewBox="0 0 11 8"><path d="M1.3 1.5L5.5 5.8L9.7 1.5" fill="none" stroke="#111" stroke-width="2.1"/></svg></div>
<div class="t" style="left:445.50px;top:743.91px;font-size:15px;line-height:18px;color:#111;font-weight:normal;letter-spacing:0px;">Delete</div>

<div class="sel" style="left:554px;top:744px;"><svg style="left:56px;top:6px" width="11" height="8" viewBox="0 0 11 8"><path d="M1.3 1.5L5.5 5.8L9.7 1.5" fill="none" stroke="#111" stroke-width="2.1"/></svg></div>
<div class="t" style="left:559.50px;top:743.91px;font-size:15px;line-height:18px;color:#111;font-weight:normal;letter-spacing:0px;">Delete</div>

<div class="sel" style="left:668px;top:744px;width:74px;"><svg style="left:57px;top:6px" width="11" height="8" viewBox="0 0 11 8"><path d="M1.3 1.5L5.5 5.8L9.7 1.5" fill="none" stroke="#111" stroke-width="2.1"/></svg></div>
<div class="t" style="left:674.30px;top:743.91px;font-size:15px;line-height:18px;color:#111;font-weight:normal;letter-spacing:0px;">Delete</div>

<div class="sel" style="left:783px;top:744px;"><svg style="left:56px;top:6px" width="11" height="8" viewBox="0 0 11 8"><path d="M1.3 1.5L5.5 5.8L9.7 1.5" fill="none" stroke="#111" stroke-width="2.1"/></svg></div>
<div class="t" style="left:788.50px;top:743.91px;font-size:15px;line-height:18px;color:#111;font-weight:normal;letter-spacing:0px;">Delete</div>

<div class="sel" style="left:899px;top:744px;"><svg style="left:56px;top:6px" width="11" height="8" viewBox="0 0 11 8"><path d="M1.3 1.5L5.5 5.8L9.7 1.5" fill="none" stroke="#111" stroke-width="2.1"/></svg></div>
<div class="t" style="left:904.50px;top:743.91px;font-size:15px;line-height:18px;color:#111;font-weight:normal;letter-spacing:0px;">Delete</div>

<div class="sel" style="left:1013px;top:744px;"><svg style="left:56px;top:6px" width="11" height="8" viewBox="0 0 11 8"><path d="M1.3 1.5L5.5 5.8L9.7 1.5" fill="none" stroke="#111" stroke-width="2.1"/></svg></div>
<div class="t" style="left:1018.50px;top:743.91px;font-size:15px;line-height:18px;color:#111;font-weight:normal;letter-spacing:0px;">Delete</div>

<div class="t" style="right:1074.70px;top:771.05px;font-size:15px;line-height:18px;color:#111;font-weight:bold;letter-spacing:-0.3px;text-align:right;">Dashboard</div>

<div class="sel" style="left:440px;top:771px;"><svg style="left:56px;top:6px" width="11" height="8" viewBox="0 0 11 8"><path d="M1.3 1.5L5.5 5.8L9.7 1.5" fill="none" stroke="#111" stroke-width="2.1"/></svg></div>
<div class="t" style="left:445.50px;top:771.25px;font-size:15px;line-height:18px;color:#111;font-weight:normal;letter-spacing:0px;">Delete</div>

<div class="sel" style="left:554px;top:771px;"><svg style="left:56px;top:6px" width="11" height="8" viewBox="0 0 11 8"><path d="M1.3 1.5L5.5 5.8L9.7 1.5" fill="none" stroke="#111" stroke-width="2.1"/></svg></div>
<div class="t" style="left:559.50px;top:771.25px;font-size:15px;line-height:18px;color:#111;font-weight:normal;letter-spacing:0px;">Delete</div>

<div class="sel" style="left:668px;top:771px;width:74px;"><svg style="left:57px;top:6px" width="11" height="8" viewBox="0 0 11 8"><path d="M1.3 1.5L5.5 5.8L9.7 1.5" fill="none" stroke="#111" stroke-width="2.1"/></svg></div>
<div class="t" style="left:674.30px;top:771.25px;font-size:15px;line-height:18px;color:#111;font-weight:normal;letter-spacing:0px;">Delete</div>

<div class="sel" style="left:783px;top:771px;"><svg style="left:56px;top:6px" width="11" height="8" viewBox="0 0 11 8"><path d="M1.3 1.5L5.5 5.8L9.7 1.5" fill="none" stroke="#111" stroke-width="2.1"/></svg></div>
<div class="t" style="left:788.50px;top:771.25px;font-size:15px;line-height:18px;color:#111;font-weight:normal;letter-spacing:0px;">Delete</div>

<div class="sel" style="left:899px;top:771px;"><svg style="left:56px;top:6px" width="11" height="8" viewBox="0 0 11 8"><path d="M1.3 1.5L5.5 5.8L9.7 1.5" fill="none" stroke="#111" stroke-width="2.1"/></svg></div>
<div class="t" style="left:904.50px;top:771.25px;font-size:15px;line-height:18px;color:#111;font-weight:normal;letter-spacing:0px;">Delete</div>

<div class="sel" style="left:1013px;top:771px;"><svg style="left:56px;top:6px" width="11" height="8" viewBox="0 0 11 8"><path d="M1.3 1.5L5.5 5.8L9.7 1.5" fill="none" stroke="#111" stroke-width="2.1"/></svg></div>
<div class="t" style="left:1018.50px;top:771.25px;font-size:15px;line-height:18px;color:#111;font-weight:normal;letter-spacing:0px;">Delete</div>

<div class="abs" style="left:433px;top:464px;width:89px;height:158px;border:3px solid #0f7f7a"></div>
<div class="abs" style="left:440px;top:517px;width:73px;height:97px;background:#fff;border:1px solid #8a8a8a;box-shadow:2px 2px 3px rgba(0,0,0,0.18)"></div>
<div class="abs" style="left:441px;top:594px;width:71px;height:19px;background:#1e90ff"></div>
<div class="t" style="left:445.00px;top:518.60px;font-size:15px;line-height:18px;color:#111;font-weight:normal;letter-spacing:0px;">None</div>

<div class="t" style="left:445.00px;top:537.50px;font-size:15px;line-height:18px;color:#111;font-weight:normal;letter-spacing:0px;">Read</div>

<div class="t" style="left:445.00px;top:556.40px;font-size:15px;line-height:18px;color:#111;font-weight:normal;letter-spacing:0px;">Create</div>

<div class="t" style="left:445.00px;top:575.30px;font-size:15px;line-height:18px;color:#111;font-weight:normal;letter-spacing:0px;">Update</div>

<div class="t" style="left:445.00px;top:594.20px;font-size:15px;line-height:18px;color:#fff;font-weight:normal;letter-spacing:0px;">Delete</div>

</body></html>
